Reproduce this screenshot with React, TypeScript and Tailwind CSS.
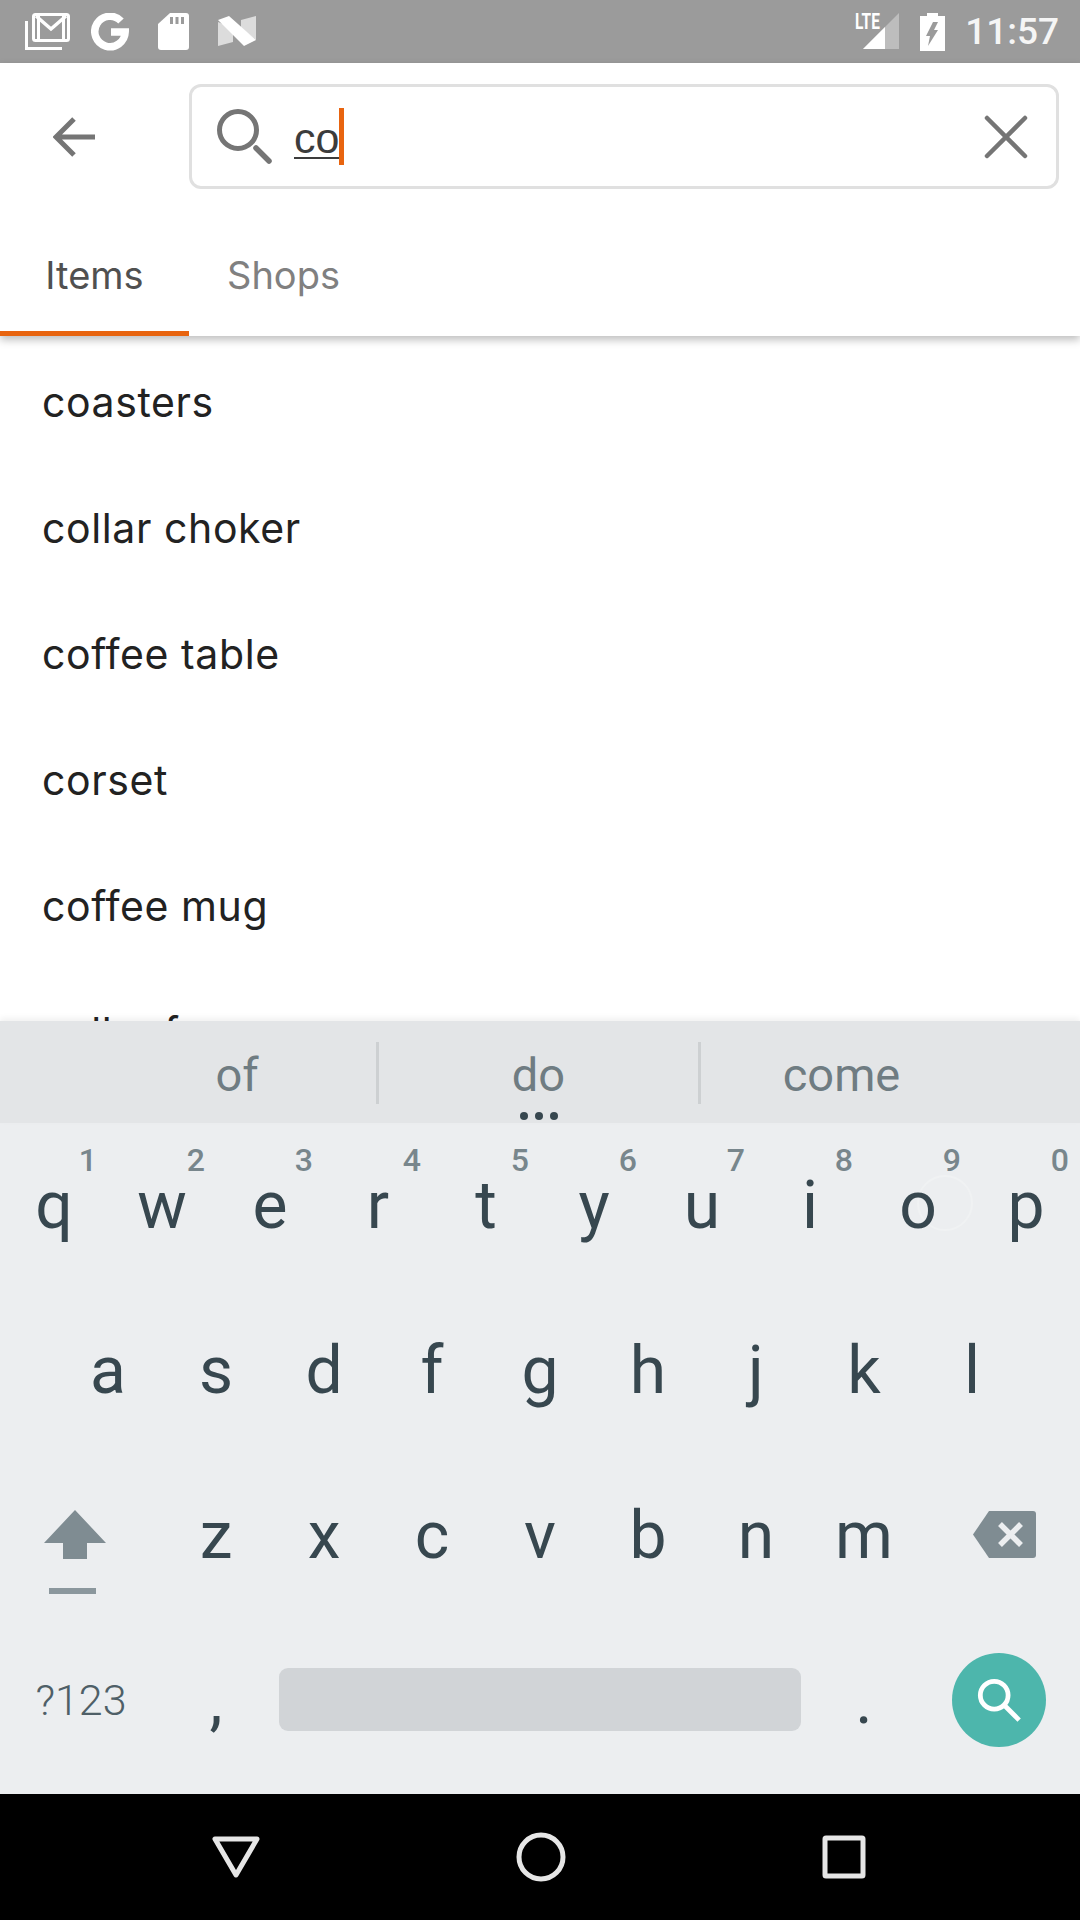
import React from 'react';

const suggestions = ['coasters', 'collar choker', 'coffee table', 'corset', 'coffee mug', 'collar f'];
const topRow = ['q', 'w', 'e', 'r', 't', 'y', 'u', 'i', 'o', 'p'];
const hints = ['1', '2', '3', '4', '5', '6', '7', '8', '9', '0'];
const midRow = ['a', 's', 'd', 'f', 'g', 'h', 'j', 'k', 'l'];
const lowRow = ['z', 'x', 'c', 'v', 'b', 'n', 'm'];

const Key: React.FC<{ label: string; hint?: string }> = ({ label, hint }) => (
  <div className="relative w-[108px] h-full flex items-center justify-center text-[66px] leading-[58px] text-[#37474f]">
    {label}
    {hint && (
      <span className="absolute top-[21px] right-[11px] text-[32px] leading-none font-medium text-[#78868c]">{hint}</span>
    )}
  </div>
);

const StatusBar = () => (
  <div className="h-[63px] shrink-0 bg-[#9b9b9b] flex items-center pl-[25px] pr-[21px]">
    <svg width="45" height="37" viewBox="0 0 45 37" fill="none" stroke="white">
      <rect x="8.5" y="1.5" width="35" height="26" rx="2" strokeWidth="3" />
      <path d="M11 3 L26 16 L41 3" strokeWidth="3.5" />
      <path d="M13.5 3 V27 M38.5 3 V27" strokeWidth="3" />
      <path d="M1.5 8 V35.5 H37" strokeWidth="3" />
    </svg>
    <svg className="ml-[21px]" width="38" height="38" viewBox="0 0 38 38" fill="none" stroke="white">
      <path d="M30 8 A15.2 15.2 0 1 0 34.2 19 H20" strokeWidth="7.5" />
    </svg>
    <svg className="ml-[29px]" width="31" height="37" viewBox="0 0 31 37">
      <path d="M12 0 H28 a3 3 0 0 1 3 3 V34 a3 3 0 0 1 -3 3 H3 a3 3 0 0 1 -3 -3 V11 Z" fill="white" />
      <path d="M12 4 h3 v7 h-3 z M17.5 4 h3 v7 h-3 z M23 4 h3 v7 h-3 z" fill="#9b9b9b" />
    </svg>
    <svg className="ml-[29px]" width="38" height="31" viewBox="0 0 38 31">
      <path d="M0 6 V30 L15 26 V12 Z" fill="#dcdcdc" />
      <path d="M23 4 L38 0 V24 L23 12 Z" fill="#dcdcdc" />
      <path d="M0 4 L11 0 L38 24 L26 30 Z" fill="white" />
    </svg>
    <div className="flex-1" />
    <div className="relative w-[46px] h-[37px]">
      <span className="absolute -top-[2px] left-[2px] text-[22px] leading-none font-bold text-white font-['Roboto',sans-serif] scale-x-[0.7] origin-top-left">LTE</span>
      <svg className="absolute left-[10px] top-0" width="36" height="37" viewBox="0 0 36 37">
        <path d="M0 36 L36 0 V36 Z" fill="#bdbdbd" />
        <path d="M0 36 L22 14 V36 Z" fill="white" />
      </svg>
    </div>
    <svg className="ml-[21px]" width="25" height="38" viewBox="0 0 25 38">
      <path d="M7 0 H18 V3 H25 V38 H0 V3 H7 Z" fill="white" />
      <path d="M13 9 H18 L14 17 H18 L8 33 L10 23 H6 Z" fill="#9b9b9b" />
    </svg>
    <span className="ml-[20px] text-[37px] leading-none font-medium text-[#f5f5f5] font-['Roboto',sans-serif]">11:57</span>
  </div>
);

const SearchHeader = () => (
  <div className="shrink-0 bg-white relative z-10 shadow-[0_4px_8px_rgba(0,0,0,0.25)]">
    <div className="h-[147px] flex items-center pl-[53px] pr-[21px]">
      <svg width="42" height="40" viewBox="0 0 42 40" fill="none" stroke="#757575" strokeWidth="5">
        <path d="M42 20 H3 M21 2 L3 20 L21 38" />
      </svg>
      <div className="ml-[94px] flex-1 h-[105px] border-[3px] border-[#e0e0e0] rounded-[12px] flex items-center pl-[25px] pr-[28px]">
        <svg width="56" height="56" viewBox="0 0 56 56" fill="none" stroke="#757575">
          <circle cx="21" cy="21" r="18.5" strokeWidth="5" />
          <path d="M39 39 L52 52" strokeWidth="5.5" strokeLinecap="round" />
        </svg>
        <span className="ml-[21px] mt-[4px] text-[43px] leading-none text-[#3c3c3c] underline underline-offset-[4px] decoration-[2px] font-['Liberation_Sans',sans-serif]">co</span>
        <span className="w-[5px] h-[57px] bg-[#e8640f] shrink-0" />
        <div className="flex-1" />
        <svg width="44" height="44" viewBox="0 0 44 44" fill="none" stroke="#757575" strokeWidth="4.5" strokeLinecap="round">
          <path d="M3 3 L41 41 M41 3 L3 41" />
        </svg>
      </div>
    </div>
    <div className="h-[126px] flex items-end font-['Inter',sans-serif] text-[38px]">
      <div className="w-[189px] h-full border-b-[5px] border-[#e8640f] text-[#505050] flex items-center justify-center pt-[10px]">Items</div>
      <div className="pl-[38px] h-full text-[#808080] flex items-center pt-[5px]">Shops</div>
    </div>
  </div>
);

const SuggestionBar = () => (
  <div className="h-[102px] shrink-0 bg-[#e3e5e7] grid grid-cols-[282px_321px_285px] pl-[96px] items-center text-[47px] text-[#6f7c82] font-['Roboto',sans-serif] shadow-[0_-3px_6px_rgba(0,0,0,0.06)] relative z-10">
    <div className="text-center pt-[7px]">of</div>
    <div className="relative h-full flex items-center justify-center pt-[7px]">
      <span className="absolute left-[-2px] top-[21px] w-[3px] h-[62px] bg-[#cdd0d2]" />
      do
      <span className="absolute right-[-2px] top-[21px] w-[3px] h-[62px] bg-[#cdd0d2]" />
      <span className="absolute bottom-[3px] left-1/2 -translate-x-1/2 flex gap-[7px]">
        <i className="block w-[8px] h-[8px] rounded-full bg-[#37474f]" />
        <i className="block w-[8px] h-[8px] rounded-full bg-[#37474f]" />
        <i className="block w-[8px] h-[8px] rounded-full bg-[#37474f]" />
      </span>
    </div>
    <div className="text-center pt-[7px]">come</div>
  </div>
);

const Keyboard = () => (
  <div className="h-[671px] shrink-0 bg-[#eceef0] font-['Roboto',sans-serif] relative">
    <span className="absolute left-[917px] top-[52px] w-[56px] h-[56px] rounded-full border-[2px] border-[#f0f2f3]" />
    <div className="flex h-[165px] relative">
      {topRow.map((k, i) => (
        <Key key={k} label={k} hint={hints[i]} />
      ))}
    </div>
    <div className="flex h-[165px] pl-[54px]">
      {midRow.map(k => (
        <Key key={k} label={k} />
      ))}
    </div>
    <div className="flex h-[165px]">
      <div className="w-[162px] flex flex-col items-center pr-[12px] pt-[57px]">
        <svg width="62" height="49" viewBox="0 0 62 49">
          <path d="M31 0 L62 33 H43 V49 H19 V33 H0 Z" fill="#7f8c92" />
        </svg>
        <span className="mt-[29px] -ml-[6px] w-[47px] h-[6px] bg-[#8b979d]" />
      </div>
      {lowRow.map(k => (
        <Key key={k} label={k} />
      ))}
      <div className="w-[162px] flex justify-center pt-[58px] pl-[10px]">
        <svg width="63" height="47" viewBox="0 0 63 47" className="self-start">
          <path d="M16 0 H60 a3 3 0 0 1 3 3 V44 a3 3 0 0 1 -3 3 H16 L0 23.5 Z" fill="#7f8c92" />
          <path d="M27 13 L48 34 M48 13 L27 34" stroke="#eceef0" strokeWidth="5.5" />
        </svg>
      </div>
    </div>
    <div className="flex h-[163px] items-center">
      <div className="w-[162px] text-center text-[43px] font-light text-[#4f5f67] pt-[2px]">?123</div>
      <div className="w-[108px] text-center text-[66px] leading-none text-[#37474f] pt-[2px]">,</div>
      <div className="w-[540px] px-[9px]">
        <div className="h-[63px] rounded-[9px] bg-[#d1d4d7]" />
      </div>
      <div className="w-[108px] text-center text-[66px] leading-none text-[#37474f] pt-[2px]">.</div>
      <div className="w-[162px] flex justify-center">
        <div className="w-[94px] h-[94px] rounded-full bg-[#4db6ac] flex items-center justify-center">
          <svg width="46" height="46" viewBox="0 0 48 48" fill="none" stroke="white" strokeWidth="5">
            <circle cx="19" cy="19" r="14.5" />
            <path d="M29 29 L45 45" />
          </svg>
        </div>
      </div>
    </div>
  </div>
);

const NavBar = () => (
  <div className="h-[126px] shrink-0 bg-black flex items-center pl-[212px]">
    <div className="w-[654px] flex items-center justify-between">
      <svg width="48" height="42" viewBox="0 0 48 42" fill="none" stroke="#e6e6e6" strokeWidth="5" strokeLinejoin="round">
        <path d="M3 3 H45 L24 39 Z" />
      </svg>
      <svg width="50" height="50" viewBox="0 0 50 50" fill="none" stroke="#e6e6e6" strokeWidth="5">
        <circle cx="25" cy="25" r="22" />
      </svg>
      <svg width="44" height="44" viewBox="0 0 44 44" fill="none" stroke="#e6e6e6" strokeWidth="5" strokeLinejoin="round">
        <rect x="3" y="3" width="38" height="38" rx="1" />
      </svg>
    </div>
  </div>
);

export default function App() {
  return (
    <div className="w-[1080px] h-[1920px] flex flex-col bg-white overflow-hidden">
      <StatusBar />
      <SearchHeader />
      <div className="flex-1 min-h-0 overflow-hidden pt-[4px] pl-[42px] font-['Inter',sans-serif] text-[41px] tracking-[0.6px] text-[#222222]">
        {suggestions.map(s => (
          <div key={s} className="h-[126px] flex items-center">{s}</div>
        ))}
      </div>
      <SuggestionBar />
      <Keyboard />
      <NavBar />
    </div>
  );
}
